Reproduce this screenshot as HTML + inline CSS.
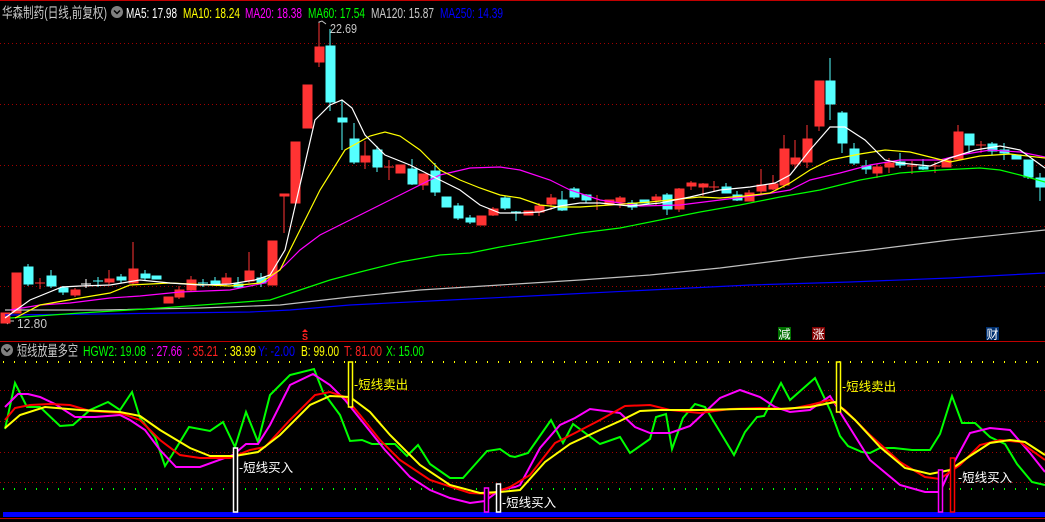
<!DOCTYPE html>
<html><head><meta charset="utf-8"><style>
html,body{margin:0;padding:0;background:#000;width:1045px;height:522px;overflow:hidden}
svg{display:block}
text{font-family:"Liberation Sans","Noto Sans CJK SC",sans-serif}
</style></head><body>
<svg width="1045" height="522" viewBox="0 0 1045 522" xmlns="http://www.w3.org/2000/svg">
<rect width="1045" height="522" fill="#000"/>
<line x1="0" y1="0.5" x2="1045" y2="0.5" stroke="#c00000"/>
<g stroke="#a00000" stroke-dasharray="1,3" stroke-width="1">
<line x1="0" y1="43.5" x2="1045" y2="43.5"/>
<line x1="0" y1="104.5" x2="1045" y2="104.5"/>
<line x1="0" y1="165.5" x2="1045" y2="165.5"/>
<line x1="0" y1="226.5" x2="1045" y2="226.5"/>
<line x1="0" y1="286.5" x2="1045" y2="286.5"/>
</g>
<text x="2" y="18" font-size="14.5" fill="#c8c8c8" textLength="105" lengthAdjust="spacingAndGlyphs">华森制药(日线,前复权)</text>
<circle cx="117" cy="12" r="6" fill="#808080"/>
<path d="M114 10.5 L117 13.5 L120 10.5" stroke="#000" stroke-width="1.5" fill="none"/>
<g font-size="14.5">
<text x="126" y="18" fill="#fff" textLength="51" lengthAdjust="spacingAndGlyphs">MA5: 17.98</text>
<text x="183" y="18" fill="#ffff00" textLength="57" lengthAdjust="spacingAndGlyphs">MA10: 18.24</text>
<text x="245" y="18" fill="#ff00ff" textLength="57" lengthAdjust="spacingAndGlyphs">MA20: 18.38</text>
<text x="308" y="18" fill="#00ff00" textLength="57" lengthAdjust="spacingAndGlyphs">MA60: 17.54</text>
<text x="371" y="18" fill="#c8c8c8" textLength="63" lengthAdjust="spacingAndGlyphs">MA120: 15.87</text>
<text x="440" y="18" fill="#0000ff" textLength="63" lengthAdjust="spacingAndGlyphs">MA250: 14.39</text>
</g>
<path d="M319 33 L319 22 L322 21 L326 24" stroke="#c8c8c8" fill="none"/>
<text x="330" y="33" font-size="13" fill="#c8c8c8" textLength="27" lengthAdjust="spacingAndGlyphs">22.69</text>
<path d="M4 321 L8 318 M4 321 L8 324 M4 321 L14 321" stroke="#c8c8c8" fill="none"/>
<text x="17" y="328" font-size="13" fill="#c8c8c8" textLength="30" lengthAdjust="spacingAndGlyphs">12.80</text>

<g stroke-width="1">
<g fill="#ff3333" stroke="#ff3333">
<rect x="1" y="313" width="9" height="10"/>
<rect x="12" y="273" width="9" height="40"/>
<line x1="40" y1="278" x2="40" y2="289"/><line x1="35" y1="283" x2="45" y2="283"/>
<rect x="71" y="290" width="9" height="5"/><line x1="75" y1="288" x2="75" y2="297"/>
<rect x="105" y="279" width="9" height="3"/><line x1="109" y1="270" x2="109" y2="285"/>
<rect x="129" y="269" width="9" height="14"/><line x1="133" y1="242" x2="133" y2="285"/>
<rect x="164" y="297" width="9" height="6"/>
<rect x="175" y="290" width="9" height="7"/><line x1="179" y1="286" x2="179" y2="299"/>
<rect x="187" y="280" width="9" height="10"/><line x1="191" y1="276" x2="191" y2="292"/>
<rect x="222" y="278" width="9" height="6"/><line x1="226" y1="273" x2="226" y2="286"/>
<rect x="245" y="271" width="9" height="10"/><line x1="249" y1="252" x2="249" y2="283"/>
<rect x="268" y="241" width="9" height="44"/>
<rect x="280" y="194" width="9" height="2"/><line x1="284" y1="196" x2="284" y2="233"/>
<rect x="291" y="142" width="9" height="61"/>
<rect x="303" y="85" width="9" height="43"/>
<rect x="315" y="47" width="9" height="15"/><line x1="319" y1="23" x2="319" y2="67"/>
<rect x="361" y="156" width="9" height="6"/><line x1="365" y1="141" x2="365" y2="169"/>
<line x1="389" y1="160" x2="389" y2="180"/><line x1="384" y1="167" x2="394" y2="167"/>
<rect x="396" y="165" width="9" height="8"/>
<rect x="419" y="174" width="9" height="11"/><line x1="423" y1="174" x2="423" y2="190"/>
<rect x="477" y="216" width="9" height="9"/>
<rect x="489" y="209" width="9" height="6"/><line x1="493" y1="207" x2="493" y2="216"/>
<rect x="524" y="211" width="9" height="4"/>
<rect x="535" y="206" width="9" height="6"/><line x1="539" y1="203" x2="539" y2="216"/>
<rect x="547" y="198" width="9" height="6"/><line x1="551" y1="194" x2="551" y2="210"/>
<line x1="597" y1="195" x2="597" y2="210"/><line x1="592" y1="203" x2="602" y2="203"/>
<rect x="605" y="200" width="9" height="4"/>
<rect x="616" y="198" width="9" height="4"/><line x1="620" y1="196" x2="620" y2="208"/>
<rect x="652" y="197" width="9" height="3"/><line x1="656" y1="194" x2="656" y2="205"/>
<rect x="675" y="189" width="9" height="20"/><line x1="679" y1="188" x2="679" y2="212"/>
<rect x="687" y="183" width="9" height="3"/><line x1="691" y1="181" x2="691" y2="190"/>
<rect x="699" y="184" width="9" height="3"/><line x1="703" y1="183" x2="703" y2="196"/>
<line x1="714" y1="181" x2="714" y2="192"/><line x1="709" y1="187" x2="719" y2="187"/>
<rect x="745" y="193" width="9" height="8"/><line x1="749" y1="190" x2="749" y2="201"/>
<rect x="757" y="185" width="9" height="6"/><line x1="761" y1="169" x2="761" y2="195"/>
<rect x="769" y="184" width="9" height="5"/><line x1="773" y1="175" x2="773" y2="190"/>
<rect x="780" y="149" width="9" height="36"/><line x1="784" y1="135" x2="784" y2="188"/>
<rect x="791" y="158" width="9" height="6"/><line x1="795" y1="140" x2="795" y2="169"/>
<rect x="803" y="139" width="9" height="23"/><line x1="807" y1="125" x2="807" y2="168"/>
<rect x="815" y="81" width="9" height="45"/><line x1="819" y1="126" x2="819" y2="131"/>
<rect x="873" y="167" width="9" height="6"/><line x1="877" y1="164" x2="877" y2="178"/>
<rect x="885" y="163" width="9" height="4"/><line x1="889" y1="158" x2="889" y2="173"/>
<line x1="912" y1="161" x2="912" y2="174"/><line x1="907" y1="166" x2="917" y2="166"/>
<line x1="935" y1="162" x2="935" y2="173"/><line x1="930" y1="166" x2="940" y2="166"/>
<rect x="942" y="160" width="9" height="7"/>
<rect x="954" y="132" width="9" height="27"/><line x1="958" y1="125" x2="958" y2="159"/>
<line x1="981" y1="141" x2="981" y2="153"/><line x1="976" y1="145" x2="986" y2="145"/>
</g>
<g fill="#55ffff" stroke="#55ffff">
<rect x="24" y="267" width="9" height="17"/><line x1="28" y1="264" x2="28" y2="286"/>
<rect x="47" y="276" width="9" height="10"/><line x1="51" y1="270" x2="51" y2="288"/>
<rect x="59" y="288" width="9" height="4"/><line x1="63" y1="286" x2="63" y2="295"/>
<line x1="98" y1="277" x2="98" y2="287"/><line x1="93" y1="281" x2="103" y2="281"/>
<rect x="117" y="277" width="9" height="3"/><line x1="121" y1="274" x2="121" y2="283"/>
<rect x="141" y="274" width="9" height="4"/><line x1="145" y1="270" x2="145" y2="280"/>
<rect x="152" y="276" width="9" height="3"/>
<line x1="203" y1="279" x2="203" y2="287"/><line x1="198" y1="283" x2="208" y2="283"/>
<rect x="211" y="281" width="9" height="3"/><line x1="215" y1="277" x2="215" y2="286"/>
<rect x="234" y="284" width="9" height="3"/><line x1="238" y1="277" x2="238" y2="288"/>
<rect x="257" y="278" width="9" height="5"/><line x1="261" y1="273" x2="261" y2="287"/>
<rect x="326" y="46" width="9" height="56"/><line x1="330" y1="29" x2="330" y2="111"/>
<rect x="338" y="118" width="9" height="4"/><line x1="342" y1="100" x2="342" y2="150"/>
<rect x="350" y="139" width="9" height="23"/><line x1="354" y1="123" x2="354" y2="164"/>
<rect x="373" y="150" width="9" height="17"/><line x1="377" y1="146" x2="377" y2="172"/>
<rect x="408" y="169" width="9" height="15"/><line x1="412" y1="159" x2="412" y2="185"/>
<rect x="431" y="171" width="9" height="21"/><line x1="435" y1="163" x2="435" y2="196"/>
<rect x="442" y="197" width="9" height="10"/>
<rect x="454" y="206" width="9" height="12"/><line x1="458" y1="203" x2="458" y2="220"/>
<rect x="466" y="218" width="9" height="4"/><line x1="470" y1="215" x2="470" y2="224"/>
<rect x="501" y="198" width="9" height="10"/><line x1="505" y1="196" x2="505" y2="210"/>
<line x1="516" y1="211" x2="516" y2="221"/><line x1="511" y1="212" x2="521" y2="212"/>
<rect x="558" y="200" width="9" height="10"/><line x1="562" y1="191" x2="562" y2="211"/>
<rect x="570" y="189" width="9" height="8"/><line x1="574" y1="187" x2="574" y2="199"/>
<rect x="582" y="195" width="9" height="5"/><line x1="586" y1="194" x2="586" y2="203"/>
<rect x="628" y="203" width="9" height="4"/><line x1="632" y1="200" x2="632" y2="210"/>
<rect x="640" y="200" width="9" height="3"/>
<rect x="663" y="195" width="9" height="14"/><line x1="667" y1="193" x2="667" y2="215"/>
<rect x="722" y="187" width="9" height="6"/><line x1="726" y1="183" x2="726" y2="193"/>
<rect x="733" y="195" width="9" height="5"/><line x1="737" y1="191" x2="737" y2="201"/>
<rect x="826" y="81" width="9" height="23"/><line x1="830" y1="58" x2="830" y2="120"/>
<rect x="838" y="113" width="9" height="30"/><line x1="842" y1="111" x2="842" y2="153"/>
<rect x="850" y="149" width="9" height="14"/><line x1="854" y1="143" x2="854" y2="165"/>
<rect x="862" y="166" width="9" height="3"/><line x1="866" y1="160" x2="866" y2="174"/>
<rect x="896" y="162" width="9" height="3"/><line x1="900" y1="153" x2="900" y2="168"/>
<rect x="919" y="167" width="9" height="2"/><line x1="923" y1="159" x2="923" y2="170"/>
<rect x="965" y="134" width="9" height="11"/><line x1="969" y1="134" x2="969" y2="153"/>
<rect x="988" y="144" width="9" height="7"/><line x1="992" y1="142" x2="992" y2="155"/>
<rect x="1000" y="150" width="9" height="3"/><line x1="1004" y1="143" x2="1004" y2="160"/>
<rect x="1012" y="155" width="9" height="4"/>
<rect x="1024" y="160" width="9" height="17"/><line x1="1028" y1="160" x2="1028" y2="179"/>
<rect x="1036" y="178" width="9" height="9"/><line x1="1040" y1="173" x2="1040" y2="201"/>
</g>
<g stroke="#fff"><line x1="86" y1="279" x2="86" y2="288"/><line x1="81" y1="284" x2="91" y2="284"/></g>
</g>

<g fill="none" stroke-width="1.2">
<polyline stroke="#0000ff" points="5,315 100,314 250,312 290,310 350,305 450,300 550,295 650,290 750,285 850,282 950,278 1045,273"/>
<polyline stroke="#c0c0c0" points="5,310 100,310 200,308 280,305 350,297 420,290 500,285 580,280 650,275 720,268 800,258 870,250 950,240 1045,230"/>
<polyline stroke="#00ff00" points="10,318 80,313 130,310 160,308 230,303 270,300 300,290 330,280 360,272 400,262 440,255 470,253 500,247 540,240 580,233 620,228 660,220 700,212 740,205 780,197 820,190 860,180 900,173 940,170 980,168 1000,170 1020,175 1045,182"/>
<polyline stroke="#ff00ff" points="10,310 40,305 70,303 110,298 140,296 180,292 230,290 265,283 285,265 300,250 320,235 350,220 380,205 410,190 440,175 470,168 500,167 520,170 550,180 570,190 600,200 640,206 680,205 720,200 760,195 790,190 810,180 840,173 870,165 900,160 940,160 960,155 990,150 1020,152 1045,157"/>
<polyline stroke="#ffff00" points="15,318 40,305 80,298 110,293 130,285 170,283 230,286 260,283 280,270 300,230 320,190 345,150 370,136 385,132 400,136 420,150 440,170 460,180 480,188 500,195 520,198 540,205 560,207 580,207 610,205 650,202 670,200 690,198 700,197 720,198 745,196 770,193 790,183 810,170 830,160 860,154 885,150 910,152 930,157 950,162 980,156 1010,154 1045,158"/>
<polyline stroke="#ffffff" points="5,318 30,300 62,287 80,286 110,285 140,280 170,283 200,285 230,284 255,280 270,275 285,250 300,185 315,120 330,105 342,100 352,108 365,135 385,155 410,165 440,180 460,190 480,205 500,213 520,213 540,212 560,206 580,203 600,203 630,206 660,203 690,197 720,190 750,187 775,183 790,175 810,150 830,127 845,127 865,140 885,160 900,163 930,166 950,158 975,150 1000,146 1020,150 1045,168"/>
</g>

<path d="M305 329 L302 332 L308 332 Z" fill="#ff2020"/>
<text x="302" y="340" font-size="9" fill="#ff2020" font-weight="bold">S</text>
<rect x="778" y="327" width="13" height="13" fill="#007000"/>
<text x="778.5" y="338.5" font-size="12" fill="#fff">减</text>
<rect x="812" y="327" width="13" height="13" fill="#800000"/>
<text x="812.5" y="338.5" font-size="12" fill="#fff">涨</text>
<rect x="986" y="327" width="13" height="13" fill="#003070"/>
<text x="986.5" y="338.5" font-size="12" fill="#fff">财</text>
<line x1="0" y1="341.5" x2="1045" y2="341.5" stroke="#c00000"/>

<circle cx="7" cy="350" r="6" fill="#808080"/>
<path d="M4 348.5 L7 351.5 L10 348.5" stroke="#000" stroke-width="1.5" fill="none"/>
<text x="17" y="356" font-size="14.5" fill="#c8c8c8" textLength="61" lengthAdjust="spacingAndGlyphs">短线放量多空</text>
<g font-size="14.5">
<text x="83" y="356" fill="#00ff00" textLength="63" lengthAdjust="spacingAndGlyphs">HGW2: 19.08</text>
<text x="151" y="356" fill="#ff00ff" textLength="31" lengthAdjust="spacingAndGlyphs">: 27.66</text>
<text x="187" y="356" fill="#ff2020" textLength="31" lengthAdjust="spacingAndGlyphs">: 35.21</text>
<text x="224" y="356" fill="#ffff00" textLength="32" lengthAdjust="spacingAndGlyphs">: 38.99</text>
<text x="258" y="356" fill="#0000ff" textLength="37" lengthAdjust="spacingAndGlyphs">Y: -2.00</text>
<text x="301" y="356" fill="#ffff00" textLength="38" lengthAdjust="spacingAndGlyphs">B: 99.00</text>
<text x="344" y="356" fill="#ff2020" textLength="38" lengthAdjust="spacingAndGlyphs">T: 81.00</text>
<text x="386" y="356" fill="#00ff00" textLength="38" lengthAdjust="spacingAndGlyphs">X: 15.00</text>
</g>
<g stroke-dasharray="1,10" stroke-width="2">
<line x1="3" y1="362" x2="1045" y2="362" stroke="#ffff00"/>
<line x1="3" y1="489" x2="1045" y2="489" stroke="#00ff00"/>
</g>
<g stroke="#a00000" stroke-dasharray="1,3">
<line x1="0" y1="390.5" x2="1045" y2="390.5"/>
<line x1="0" y1="421.5" x2="1045" y2="421.5"/>
<line x1="0" y1="452.5" x2="1045" y2="452.5"/>
<line x1="0" y1="482.5" x2="1045" y2="482.5"/>
</g>
<rect x="3" y="512" width="1042" height="5" fill="#0000ff"/>
<line x1="0" y1="518.5" x2="1045" y2="518.5" stroke="#c00000"/>

<g fill="none" stroke-width="2">
<polyline stroke="#00ff00" points="5,429 15,383 27,407 40,407 60,426 73,425 90,410 108,402 120,410 132,392 140,418 155,437 165,466 172,455 189,427 210,431 223,422 235,447 246,412 258,442 270,395 290,375 314,369 323,392 340,415 350,441 362,440 372,444 395,444 407,456 418,445 430,464 450,478 463,478 487,451 500,449 510,456 515,457 528,453 551,420 563,443 573,424 600,444 620,437 630,453 650,439 656,417 666,414 672,449 683,418 695,404 705,407 734,455 745,432 757,417 764,416 781,383 790,400 815,378 831,412 840,436 848,446 862,452 870,453 880,448 894,448 912,450 930,450 940,434 952,396 962,423 975,423 990,437 1005,444 1017,464 1032,482 1045,485"/>
<polyline stroke="#ff00ff" points="5,407 18,394 28,394 40,397 55,404 75,417 95,417 120,415 130,420 145,430 160,450 176,467 200,467 233,455 246,444 258,444 270,425 290,385 313,374 330,385 345,400 365,425 385,450 410,477 430,490 450,498 470,503 485,501 500,490 515,487 520,485 540,448 560,425 575,418 590,409 620,413 635,427 650,433 670,433 690,426 705,412 720,398 740,390 760,397 775,407 790,412 810,410 830,396 845,420 870,460 900,485 925,492 940,492 950,470 970,433 990,428 1010,430 1030,453 1045,472"/>
<polyline stroke="#ff0000" points="5,420 15,408 30,405 50,404 70,405 90,411 120,413 140,420 160,440 180,455 200,458 230,458 250,450 265,447 290,420 315,395 330,392 345,397 360,415 380,440 400,460 430,480 470,493 490,494 510,487 530,475 555,443 575,433 600,420 625,406 650,405 670,410 700,413 730,409 760,408 790,409 810,405 830,400 845,410 870,435 900,462 925,477 940,479 960,465 980,445 1000,440 1020,442 1045,460"/>
<polyline stroke="#ffff00" points="5,428 20,415 45,407 80,410 120,412 140,416 160,430 190,448 210,456 235,456 258,452 280,435 310,405 330,396 350,397 370,412 390,435 420,465 450,485 480,493 500,492 520,490 545,462 570,444 600,430 620,421 640,411 660,410 700,410 740,409 780,409 810,407 835,402 855,420 880,447 905,468 930,474 950,470 970,456 990,443 1010,440 1025,442 1045,455"/>
</g>

<g fill="#000" stroke-width="1.5">
<rect x="233.5" y="448" width="4" height="64" stroke="#fff"/>
<rect x="348.5" y="362" width="4" height="45" stroke="#ffff00"/>
<rect x="484.5" y="488" width="4" height="24" stroke="#ff00ff"/>
<rect x="496.5" y="484" width="4" height="28" stroke="#fff"/>
<rect x="836.5" y="362" width="4" height="50" stroke="#ffff00"/>
<rect x="938.5" y="470" width="4" height="42" stroke="#ff00ff"/>
<rect x="950.5" y="458" width="4" height="54" stroke="#ff0000"/>
</g>
<g font-size="12.5">
<text x="239" y="472" fill="#fff">-短线买入</text>
<text x="354" y="389" fill="#ffff00">-短线卖出</text>
<text x="502" y="507" fill="#fff">-短线买入</text>
<text x="842" y="391" fill="#ffff00">-短线卖出</text>
<text x="958" y="482" fill="#fff">-短线买入</text>
</g>
</svg>
</body></html>
